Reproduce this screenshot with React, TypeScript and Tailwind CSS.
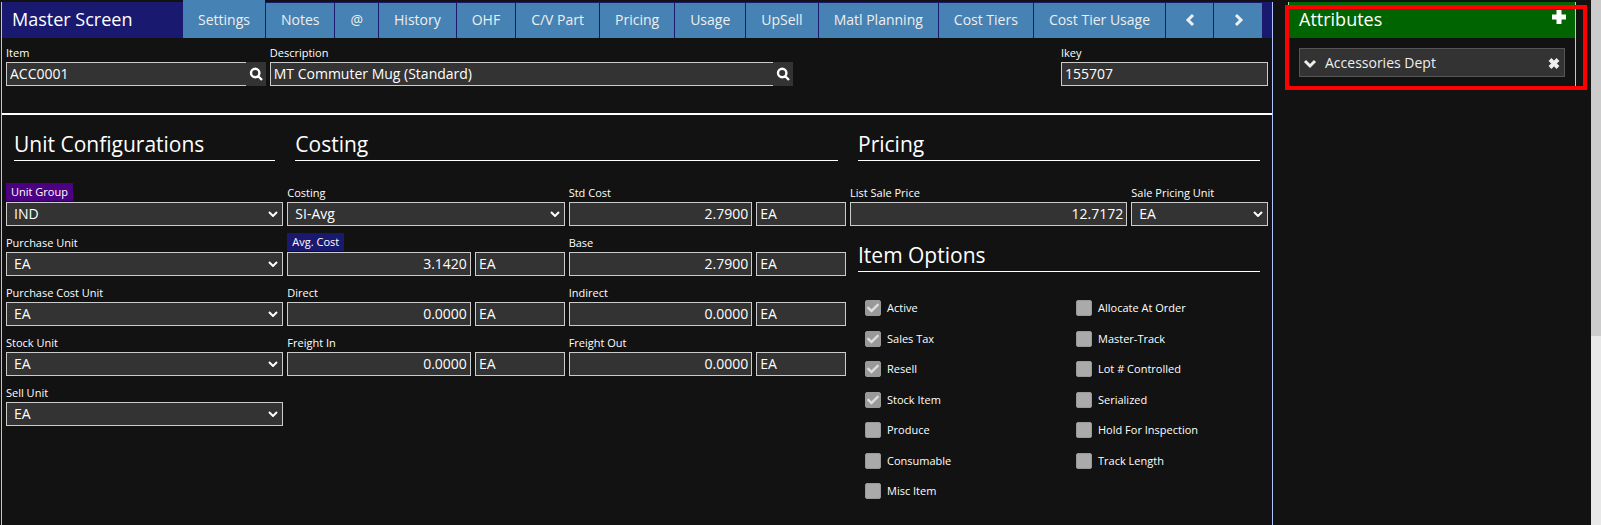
import type { ReactNode } from 'react'
import { FaCheck } from 'react-icons/fa'

const TABS = [
    'Settings', 'Notes', '@', 'History', 'OHF', 'C/V Part', 'Pricing', 'Usage',
    'UpSell', 'Matl Planning', 'Cost Tiers', 'Cost Tier Usage',
]

const UNITS = ['Purchase Unit', 'Purchase Cost Unit', 'Stock Unit', 'Sell Unit']

const LEFT_OPTIONS = [
    { label: 'Active', checked: true },
    { label: 'Sales Tax', checked: true },
    { label: 'Resell', checked: true },
    { label: 'Stock Item', checked: true },
    { label: 'Produce', checked: false },
    { label: 'Consumable', checked: false },
    { label: 'Misc Item', checked: false },
]

const RIGHT_OPTIONS = [
    { label: 'Allocate At Order', checked: false },
    { label: 'Master-Track', checked: false },
    { label: 'Lot # Controlled', checked: false },
    { label: 'Serialized', checked: false },
    { label: 'Hold For Inspection', checked: false },
    { label: 'Track Length', checked: false },
]

const toId = (label: string) => label.toLowerCase().replace(/[^a-z]+/g, '-')

const BOX = 'block h-6 w-full min-w-0 border border-[#ccc] bg-[#333] text-sm leading-5 text-white outline-none'
const INPUT = `${BOX} px-[3px] pb-0.5`

// Heavy line icon, drawn in a 14x14 box
function Icon({ d, width = 3, className = '' }: { d: string; width?: number; className?: string }) {
    return (
        <svg viewBox="0 0 14 14" fill="none" stroke="currentColor" strokeWidth={width} className={`h-[14px] w-[14px] ${className}`}>
            <path d={d} />
        </svg>
    )
}

function Label({ text, badge = '' }: { text: string; badge?: string }) {
    return (
        <div className="flex h-[19px] items-start">
            <label
                htmlFor={toId(text)}
                className={`whitespace-nowrap text-[11px] ${badge ? `h-[18px] px-[5px] leading-[18px] ${badge}` : 'leading-5'}`}
            >
                {text}
            </label>
        </div>
    )
}

function SelectField({ label, value, badge }: { label: string; value: string; badge?: string }) {
    return (
        <div>
            <Label text={label} badge={badge} />
            <div className="relative">
                <select id={toId(label)} defaultValue={value} className={`${BOX} appearance-none pl-[7px]`}>
                    <option>{value}</option>
                </select>
                <svg viewBox="0 0 10 6" className="pointer-events-none absolute right-[5px] top-[9px] h-[6px] w-[10px]" fill="none" stroke="#fff" strokeWidth="2">
                    <path d="M1 1l4 4 4-4" />
                </svg>
            </div>
        </div>
    )
}

function CostField({ label, value, badge }: { label: string; value: string; badge?: string }) {
    return (
        <div>
            <Label text={label} badge={badge} />
            <div className="grid grid-cols-3 gap-1">
                <input id={toId(label)} defaultValue={value} className={`${INPUT} col-span-2 text-right`} />
                <input aria-label={`${label} unit`} defaultValue="EA" className={INPUT} />
            </div>
        </div>
    )
}

function SearchField({ label, value, className }: { label: string; value: string; className: string }) {
    return (
        <div className={className}>
            <Label text={label} />
            <div className="flex">
                <input id={toId(label)} defaultValue={value} className={`${INPUT} flex-1 border-r-0`} />
                <button type="button" aria-label={`Search ${label}`} className="flex h-6 w-5 items-center justify-center bg-[#333]">
                    <Icon width={2.4} d="M10.4 6a4.2 4.2 0 1 1-8.4 0a4.2 4.2 0 1 1 8.4 0M9 9l4 4" />
                </button>
            </div>
        </div>
    )
}

function Heading({ children }: { children: ReactNode }) {
    return <h2 className="mx-2 h-[31px] border-b border-white text-[21px] leading-[28px]">{children}</h2>
}

function Options({ items, className }: { items: typeof LEFT_OPTIONS; className: string }) {
    return (
        <div className={`flex flex-col justify-between pl-[15px] ${className}`}>
            {items.map(({ label, checked }) => (
                <label key={label} className="flex h-4 items-center gap-[6px] text-[11px] leading-4">
                    <span className="relative flex h-4 w-4">
                        <input type="checkbox" defaultChecked={checked} className={`h-4 w-4 appearance-none rounded-[2px] border border-[#999] ${checked ? 'bg-[#999]' : 'bg-[#aaa]'}`} />
                        {checked && <FaCheck className="pointer-events-none absolute left-[2px] top-[2px] h-3 w-3 text-[#ddd]" />}
                    </span>
                    {label}
                </label>
            ))}
        </div>
    )
}

function TabBar() {
    const tab = 'mr-px bg-[#4682b4] px-[15px] text-[#eee]'
    return (
        <header className="-mt-0.5 flex h-[38px] bg-[linear-gradient(#121212_2px,#191970_2px)]">
            <h1 className="flex-1 whitespace-nowrap pl-[10px] pt-0.5 text-lg leading-[34px]">Master Screen</h1>
            <nav className="flex whitespace-nowrap pr-[9px] text-sm">
                {TABS.map((name, i) => (
                    <button key={name} type="button" className={`${tab} ${i === 0 ? 'pt-0.5' : 'mt-[3px] pb-px'}`}>
                        {name}
                    </button>
                ))}
                <button type="button" aria-label="Previous tab" className={`${tab} mt-[3px] flex w-[47px] items-center justify-center pb-0.5`}>
                    <Icon d="M10 2L5 7l5 5" />
                </button>
                <button type="button" aria-label="Next tab" className={`${tab} mt-[3px] flex w-[48px] items-center justify-center pb-0.5`}>
                    <Icon d="M5 2l5 5-5 5" />
                </button>
            </nav>
        </header>
    )
}

function MasterScreen() {
    return (
        <main className="ml-px mt-0.5 flex-1 border-x border-[#b0c4ff]">
            <TabBar />

            <section className="grid h-[77px] grid-cols-24 gap-1 border-b-2 border-white px-1 pt-[5px]">
                <SearchField label="Item" value="ACC0001" className="col-span-5" />
                <SearchField label="Description" value="MT Commuter Mug (Standard)" className="col-span-10" />
                <div className="col-span-4 col-start-21">
                    <Label text="Ikey" />
                    <input id="ikey" defaultValue="155707" className={INPUT} />
                </div>
            </section>

            <section className="grid grid-cols-9 gap-x-1 px-1 pt-[15px]">
                <div className="col-span-2">
                    <Heading>Unit Configurations</Heading>
                    <div className="mt-[22px] flex flex-col gap-[7px]">
                        <SelectField label="Unit Group" value="IND" badge="bg-[#4b0082]" />
                        {UNITS.map((label) => <SelectField key={label} label={label} value="EA" />)}
                    </div>
                </div>

                <div className="col-span-4">
                    <Heading>Costing</Heading>
                    <div className="mt-[22px] grid grid-cols-2 gap-x-1 gap-y-[7px]">
                        <SelectField label="Costing" value="SI-Avg" />
                        <CostField label="Std Cost" value="2.7900" />
                        <CostField label="Avg. Cost" value="3.1420" badge="bg-[#191970]" />
                        <CostField label="Base" value="2.7900" />
                        <CostField label="Direct" value="0.0000" />
                        <CostField label="Indirect" value="0.0000" />
                        <CostField label="Freight In" value="0.0000" />
                        <CostField label="Freight Out" value="0.0000" />
                    </div>
                </div>

                <div className="col-span-3">
                    <Heading>Pricing</Heading>
                    <div className="mt-[22px] grid grid-cols-3 gap-1">
                        <div className="col-span-2">
                            <Label text="List Sale Price" />
                            <input id="list-sale-price" defaultValue="12.7172" className={`${INPUT} text-right`} />
                        </div>
                        <SelectField label="Sale Pricing Unit" value="EA" />
                    </div>
                    <div className="mt-[15px]">
                        <Heading>Item Options</Heading>
                    </div>
                    <div className="mt-7 grid grid-cols-2 gap-x-1">
                        <Options items={LEFT_OPTIONS} className="h-[199px]" />
                        <Options items={RIGHT_OPTIONS} className="h-[169px]" />
                    </div>
                </div>
            </section>
        </main>
    )
}

function Attributes() {
    return (
        <aside className="relative mx-[15px] mt-0.5 w-[288px]">
            <div className="border-x border-[#90ee90]">
                <header className="flex h-9 justify-between bg-[#006400] pl-[10px] pr-[9px]">
                    <h2 className="text-lg leading-[34px]">Attributes</h2>
                    <button type="button" aria-label="Add attribute" className="flex h-[30px] items-center">
                        <Icon width={5} d="M7 0v14M0 7h14" />
                    </button>
                </header>
                <div className="p-[10px]">
                    <div className="flex h-[29px] items-center border border-[#555] bg-[#333] px-[3px] text-sm text-[#eee]">
                        <button type="button" aria-label="Expand Accessories Dept">
                            <Icon d="M2 5l5 5 5-5" />
                        </button>
                        <span className="ml-2 flex-1">Accessories Dept</span>
                        <button type="button" aria-label="Remove Accessories Dept">
                            <Icon width={4} d="M3 3.5l8 8M11 3.5l-8 8" />
                        </button>
                    </div>
                </div>
            </div>
            <div className="pointer-events-none absolute -left-[3px] -right-[11px] top-[3px] h-[85px] border-4 border-[#ff0000]" />
        </aside>
    )
}

export default function App() {
    return (
        <div className="flex min-h-screen bg-[#121212] font-['Open_Sans',sans-serif] text-white">
            <MasterScreen />
            <Attributes />
            <div className="w-[10px] bg-[#e8e8e8]">
                <div className="h-[336px] bg-[#ccc]" />
            </div>
        </div>
    )
}
